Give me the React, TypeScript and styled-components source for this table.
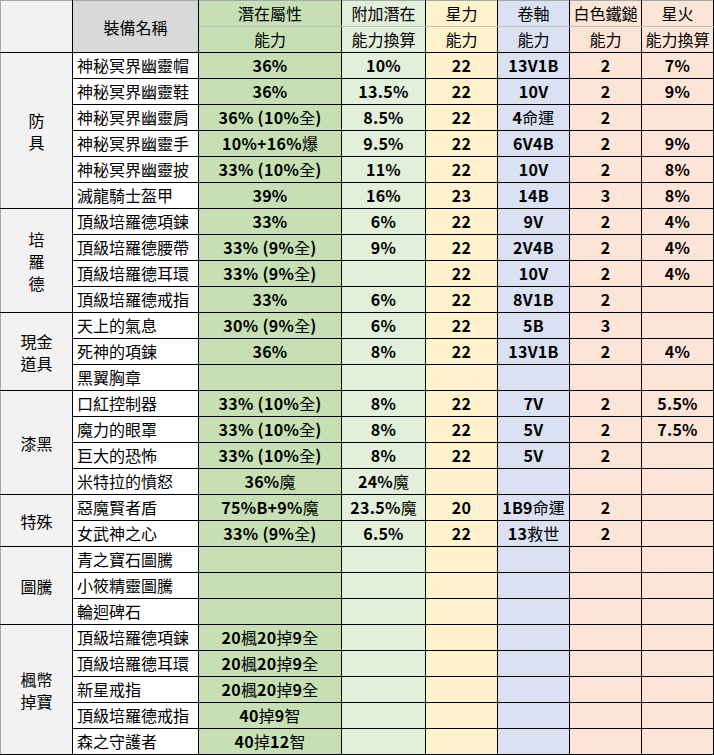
import React from "react";
import styled, { createGlobalStyle } from "styled-components";

const GlobalStyle = createGlobalStyle`
  html, body {
    margin: 0;
    padding: 0;
    background: #ffffff;
  }
  body {
    font-family: "Noto Sans CJK TC", "Noto Sans", sans-serif;
    color: #000000;
  }
`;

const palette = {
  group: "#f2f2f2",
  name: "#ffffff",
  nameHead: "#d9d9d9",
  potential: "#c6e0b4",
  bonus: "#e2efda",
  star: "#fff2cc",
  scroll: "#d9e1f2",
  hammer: "#fce4d6",
  flame: "#fce4d6",
};

type ColKey = "potential" | "bonus" | "star" | "scroll" | "hammer" | "flame";

const columns: { key: ColKey; title: string; sub: string; width: number }[] = [
  { key: "potential", title: "潛在屬性", sub: "能力", width: 143 },
  { key: "bonus", title: "附加潛在", sub: "能力換算", width: 84 },
  { key: "star", title: "星力", sub: "能力", width: 72 },
  { key: "scroll", title: "卷軸", sub: "能力", width: 72 },
  { key: "hammer", title: "白色鐵鎚", sub: "能力", width: 72 },
  { key: "flame", title: "星火", sub: "能力換算", width: 72 },
];

type Item = [string, string, string, string, string, string, string];

const groups: { label: string[]; items: Item[] }[] = [
  {
    label: ["防", "具"],
    items: [
      ["神秘冥界幽靈帽", "36%", "10%", "22", "13V1B", "2", "7%"],
      ["神秘冥界幽靈鞋", "36%", "13.5%", "22", "10V", "2", "9%"],
      ["神秘冥界幽靈肩", "36% (10%全)", "8.5%", "22", "4命運", "2", ""],
      ["神秘冥界幽靈手", "10%+16%爆", "9.5%", "22", "6V4B", "2", "9%"],
      ["神秘冥界幽靈披", "33% (10%全)", "11%", "22", "10V", "2", "8%"],
      ["滅龍騎士盔甲", "39%", "16%", "23", "14B", "3", "8%"],
    ],
  },
  {
    label: ["培", "羅", "德"],
    items: [
      ["頂級培羅德項鍊", "33%", "6%", "22", "9V", "2", "4%"],
      ["頂級培羅德腰帶", "33% (9%全)", "9%", "22", "2V4B", "2", "4%"],
      ["頂級培羅德耳環", "33% (9%全)", "", "22", "10V", "2", "4%"],
      ["頂級培羅德戒指", "33%", "6%", "22", "8V1B", "2", ""],
    ],
  },
  {
    label: ["現金", "道具"],
    items: [
      ["天上的氣息", "30% (9%全)", "6%", "22", "5B", "3", ""],
      ["死神的項鍊", "36%", "8%", "22", "13V1B", "2", "4%"],
      ["黑翼胸章", "", "", "", "", "", ""],
    ],
  },
  {
    label: ["漆黑"],
    items: [
      ["口紅控制器", "33% (10%全)", "8%", "22", "7V", "2", "5.5%"],
      ["魔力的眼罩", "33% (10%全)", "8%", "22", "5V", "2", "7.5%"],
      ["巨大的恐怖", "33% (10%全)", "8%", "22", "5V", "2", ""],
      ["米特拉的憤怒", "36%魔", "24%魔", "", "", "", ""],
    ],
  },
  {
    label: ["特殊"],
    items: [
      ["惡魔賢者盾", "75%B+9%魔", "23.5%魔", "20", "1B9命運", "2", ""],
      ["女武神之心", "33% (9%全)", "6.5%", "22", "13救世", "2", ""],
    ],
  },
  {
    label: ["圖騰"],
    items: [
      ["青之寶石圖騰", "", "", "", "", "", ""],
      ["小筱精靈圖騰", "", "", "", "", "", ""],
      ["輪迴碑石", "", "", "", "", "", ""],
    ],
  },
  {
    label: ["楓幣", "掉寶"],
    items: [
      ["頂級培羅德項鍊", "20楓20掉9全", "", "", "", "", ""],
      ["頂級培羅德耳環", "20楓20掉9全", "", "", "", "", ""],
      ["新星戒指", "20楓20掉9全", "", "", "", "", ""],
      ["頂級培羅德戒指", "40掉9智", "", "", "", "", ""],
      ["森之守護者", "40掉12智", "", "", "", "", ""],
    ],
  },
];

const Sheet = styled.table`
  border-collapse: collapse;
  table-layout: fixed;
  width: 714px;
  font-size: 16px;
  border-top: 1px solid #a6a6a6;
  border-left: 1px solid #a6a6a6;
`;

const Row = styled.tr`
  height: 26px;
`;

const Corner = styled.th`
  background: ${palette.group};
  border-right: 1px solid #000;
  border-bottom: 1px solid #000;
  padding: 0;
`;

const NameHead = styled.th`
  background: ${palette.nameHead};
  border-right: 1px solid #000;
  border-bottom: 1px solid #000;
  font-weight: 400;
  padding: 0;
  text-align: center;
`;

const ColHead = styled.th<{ $bg: string; $top?: boolean }>`
  background: ${(p) => p.$bg};
  border-right: 1px solid #000;
  border-bottom: 1px solid ${(p) => (p.$top ? "#bfbfbf" : "#000")};
  font-weight: 400;
  padding: 0;
  line-height: 25px;
  text-align: center;
  white-space: nowrap;
`;

const GroupCell = styled.td`
  background: ${palette.group};
  border-right: 1px solid #000;
  border-bottom: 1px solid #000;
  text-align: center;
  vertical-align: middle;
  padding: 0;
`;

const GroupLine = styled.div`
  height: 22px;
  line-height: 22px;
  overflow: hidden;
`;

const NameCell = styled.td`
  background: ${palette.name};
  border-right: 1px solid #000;
  border-bottom: 1px solid #000;
  padding: 0 0 0 4px;
  text-align: left;
  white-space: nowrap;
  overflow: hidden;
  line-height: 25px;
`;

const ValueCell = styled.td<{ $bg: string }>`
  background: ${(p) => p.$bg};
  border-right: 1px solid #000;
  border-bottom: 1px solid #000;
  padding: 0;
  text-align: center;
  white-space: nowrap;
  overflow: hidden;
  font-weight: 700;
  letter-spacing: 0.3px;
  line-height: 25px;
`;

const Han = styled.span`
  font-weight: 400;
  letter-spacing: 0;
`;

// digits come out bold, Chinese characters stay regular, as in the sheet
const Mixed = ({ text }: { text: string }) => {
  const parts = text.split(/([\u3400-\u9fff]+)/).filter(Boolean);
  return (
    <>
      {parts.map((p, i) =>
        /[\u3400-\u9fff]/.test(p) ? <Han key={i}>{p}</Han> : <React.Fragment key={i}>{p}</React.Fragment>
      )}
    </>
  );
};

export default function App() {
  return (
    <>
      <GlobalStyle />
      <Sheet>
        <colgroup>
          <col style={{ width: 72 }} />
          <col style={{ width: 126 }} />
          {columns.map((c) => (
            <col key={c.key} style={{ width: c.width }} />
          ))}
        </colgroup>
        <thead>
          <Row>
            <Corner rowSpan={2} />
            <NameHead rowSpan={2}>裝備名稱</NameHead>
            {columns.map((c) => (
              <ColHead key={c.key} $bg={palette[c.key]} $top>
                {c.title}
              </ColHead>
            ))}
          </Row>
          <Row>
            {columns.map((c) => (
              <ColHead key={c.key} $bg={palette[c.key]}>
                {c.sub}
              </ColHead>
            ))}
          </Row>
        </thead>
        <tbody>
          {groups.map((g) =>
            g.items.map((item, i) => (
              <Row key={g.label.join("") + i}>
                {i === 0 && (
                  <GroupCell rowSpan={g.items.length}>
                    {g.label.map((l, j) => (
                      <GroupLine key={j}>{l}</GroupLine>
                    ))}
                  </GroupCell>
                )}
                <NameCell>{item[0]}</NameCell>
                {columns.map((c, k) => (
                  <ValueCell key={c.key} $bg={palette[c.key]}>
                    <Mixed text={item[k + 1]} />
                  </ValueCell>
                ))}
              </Row>
            ))
          )}
        </tbody>
      </Sheet>
    </>
  );
}
